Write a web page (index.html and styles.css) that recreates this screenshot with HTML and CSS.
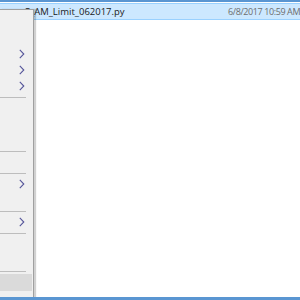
FILE: index.html
```html
<!DOCTYPE html>
<html>
<head>
<meta charset="utf-8">
<link rel="stylesheet" href="styles.css">
</head>
<body>
<div class="window">
  <div class="list">
    <div class="row selected">
      <span class="name">C_AM_Limit_062017.py</span>
      <span class="date">6/8/2017 10:59 AM</span>
    </div>
  </div>
  <div class="menu">
    <div class="item"></div>
    <div class="item"></div>
    <div class="item sub"><svg class="chev" width="6" height="10" viewBox="0 0 6 10"><polyline points="0.8,0.8 4.8,5 0.8,9.2"/></svg></div>
    <div class="item sub"><svg class="chev" width="6" height="10" viewBox="0 0 6 10"><polyline points="0.8,0.8 4.8,5 0.8,9.2"/></svg></div>
    <div class="item sub"><svg class="chev" width="6" height="10" viewBox="0 0 6 10"><polyline points="0.8,0.8 4.8,5 0.8,9.2"/></svg></div>
    <div class="sep"></div>
    <div class="item"></div>
    <div class="item"></div>
    <div class="item"></div>
    <div class="sep"></div>
    <div class="item"></div>
    <div class="sep"></div>
    <div class="item sub"><svg class="chev" width="6" height="10" viewBox="0 0 6 10"><polyline points="0.8,0.8 4.8,5 0.8,9.2"/></svg></div>
    <div class="item"></div>
    <div class="sep"></div>
    <div class="item sub"><svg class="chev" width="6" height="10" viewBox="0 0 6 10"><polyline points="0.8,0.8 4.8,5 0.8,9.2"/></svg></div>
    <div class="sep"></div>
    <div class="item"></div>
    <div class="item"></div>
    <div class="sep"></div>
    <div class="item hover"></div>
  </div>
</div>
</body>
</html>
```
FILE: styles.css
```css
html, body {
  margin: 0;
  padding: 0;
  background: #ffffff;
}
.window {
  position: relative;
  width: 300px;
  height: 300px;
  box-sizing: border-box;
  border-top: 2px solid #5a96d2;
  border-bottom: 3px solid #5a96d2;
  overflow: hidden;
  font-family: "Open Sans", "Noto Sans", sans-serif;
  font-size: 9.5px;
}
.list {
  display: flex;
  flex-direction: column;
  padding-top: 1px;
}
.row {
  display: flex;
  align-items: center;
  height: 17px;
  box-sizing: border-box;
  white-space: nowrap;
}
.selected {
  background: #cce8ff;
  border-top: 1px solid #99d1ff;
  border-bottom: 1px solid #99d1ff;
}
.name {
  flex: none;
  color: #1a1a1a;
  margin-left: 24px;
  width: 204px;
}
.date {
  flex: none;
  color: #6d6d6d;
  font-size: 9px;
  letter-spacing: -0.4px;
}
.menu {
  position: absolute;
  left: 0;
  top: 7px;
  width: 33px;
  bottom: 0;
  background: #f0f0f0;
  border-top: 1px solid #a0a0a0;
  border-right: 1px solid #a0a0a0;
  box-shadow: 2px 0 1px rgba(0,0,0,0.18);
  padding-top: 4px;
  display: flex;
  flex-direction: column;
}
.item {
  height: 16px;
  flex: none;
  display: flex;
  align-items: center;
  justify-content: flex-end;
  margin-right: 1px;
}
.chev {
  display: block;
  margin-right: 7px;
  fill: none;
  stroke: #55559a;
  stroke-width: 1.1;
}
.sep {
  height: 6px;
  flex: none;
  display: flex;
  align-items: center;
}
.sep::before {
  content: "";
  display: block;
  width: 26px;
  height: 1px;
  background: #bdbdbd;
}
.hover {
  background: #dadada;
  height: 17px;
}
```
